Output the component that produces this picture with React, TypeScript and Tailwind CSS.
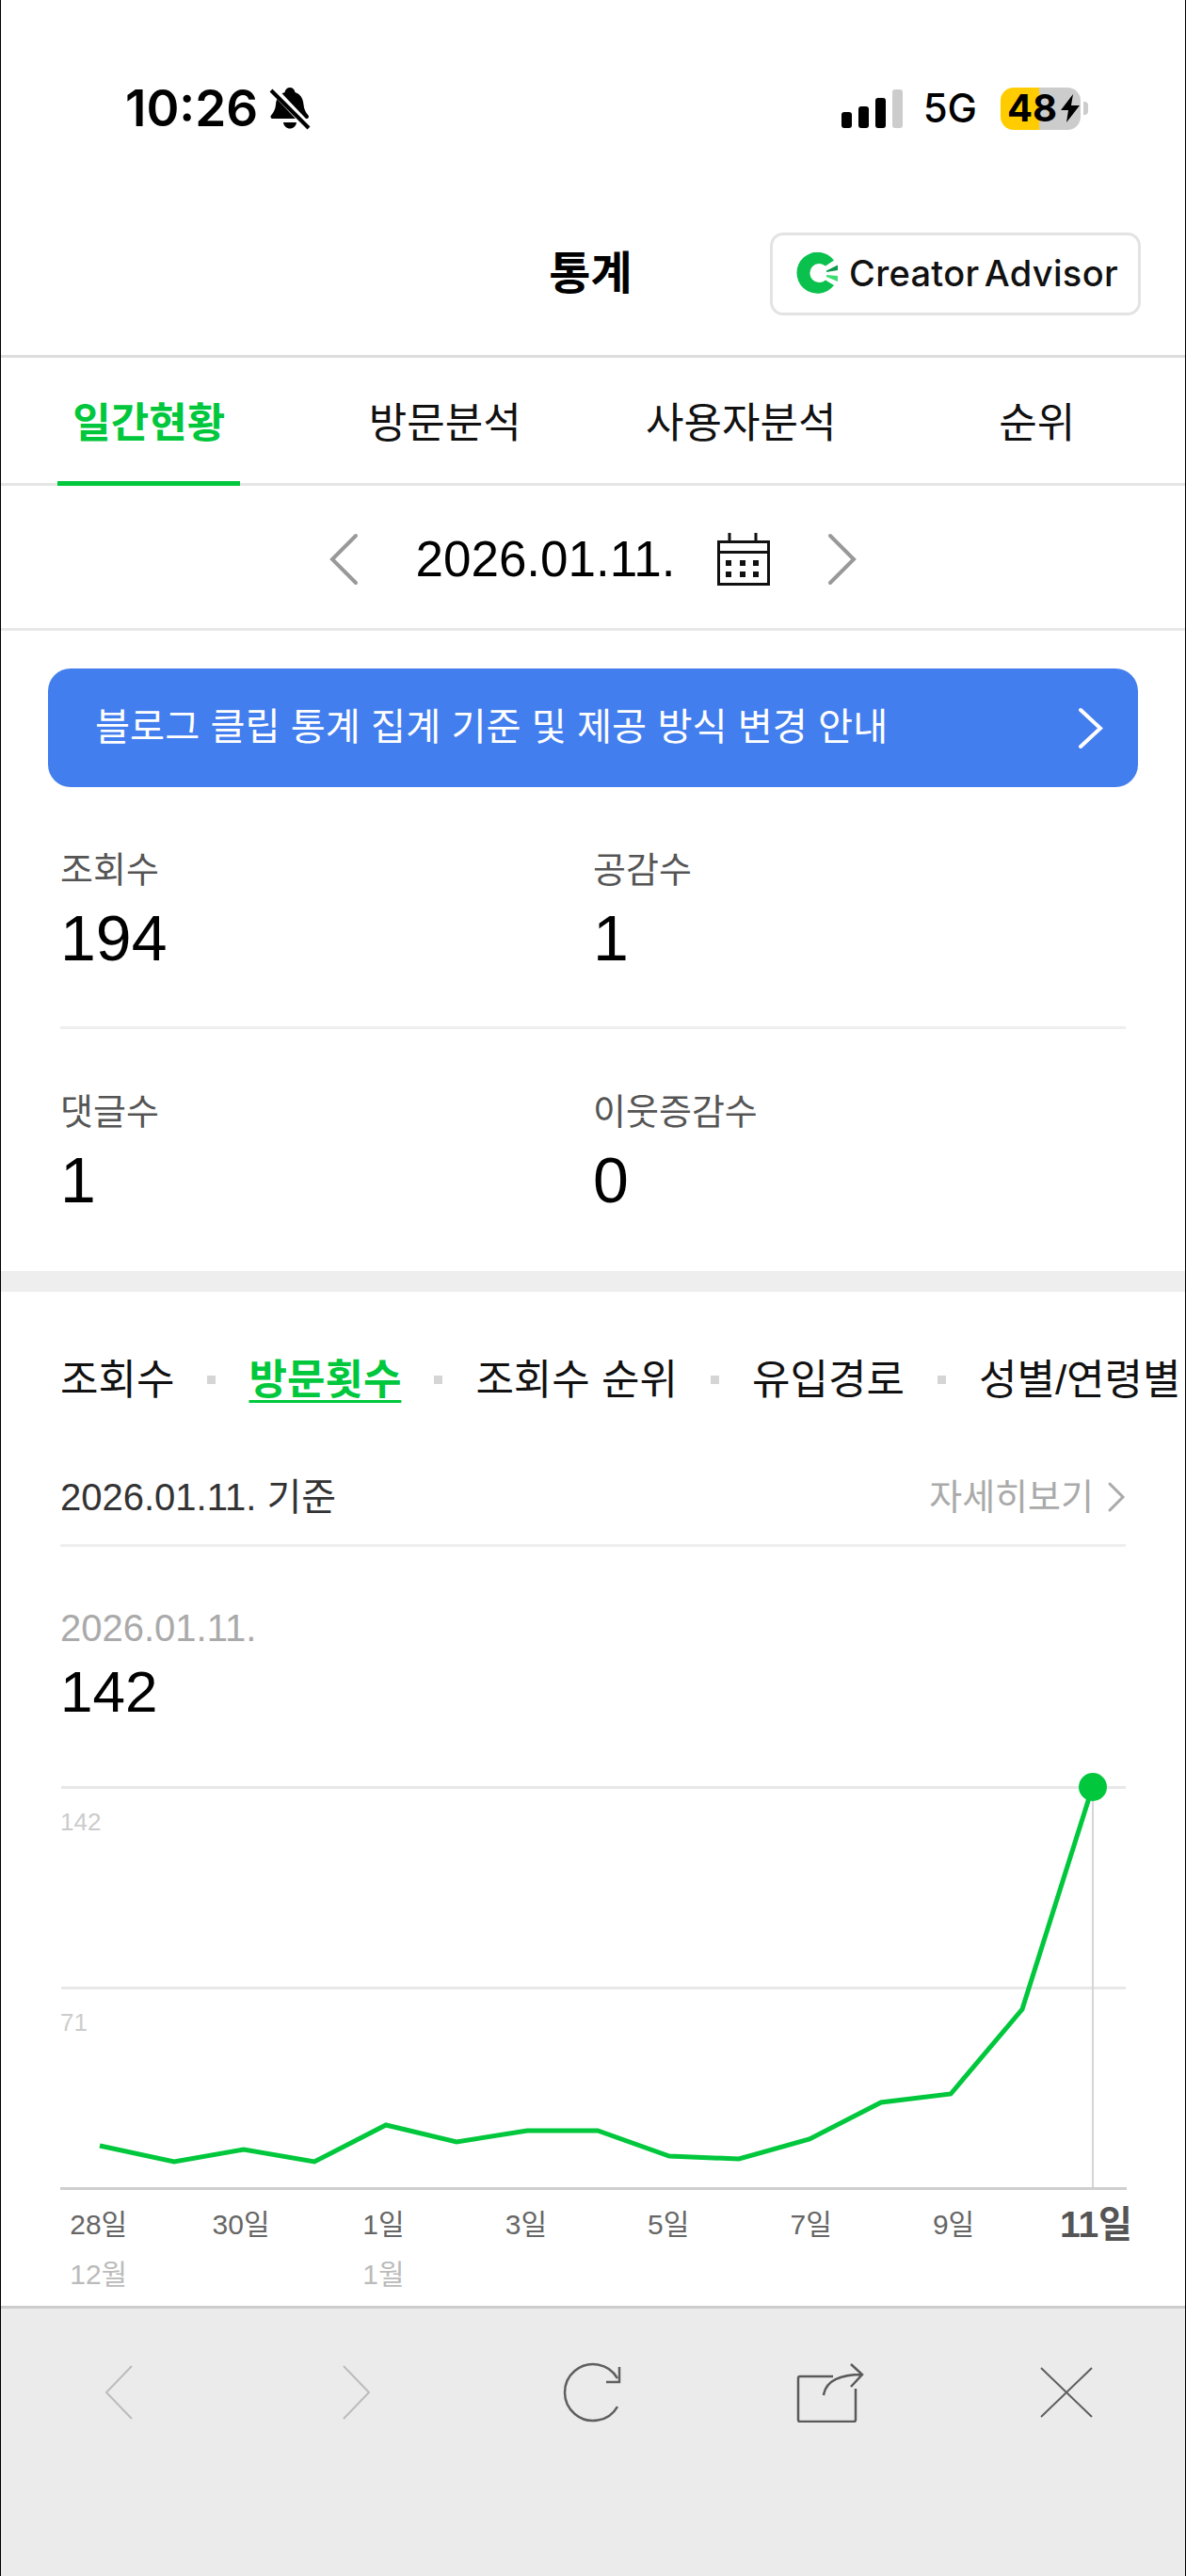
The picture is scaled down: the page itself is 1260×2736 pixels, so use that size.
const font = "font-['Liberation_Sans','Noto_Sans_CJK_KR',sans-serif]";

const tabs = ["일간현황", "방문분석", "사용자분석", "순위"];
const points =
  "106,398 185,415 259,402 334,415 410,376 485,394 560,382 635,382 711,409 785,412 860,391 936,352 1010,343 1086,253 1161,16";
const days = [
  { day: "28일", month: "12월" },
  { day: "30일" },
  { day: "1일", month: "1월" },
  { day: "3일" },
  { day: "5일" },
  { day: "7일" },
  { day: "9일" },
];

const Logo = () => (
  <svg width="46" height="46" viewBox="0 0 46 46" className="shrink-0">
    <path d="M40 8.5A22 22 0 1 0 40 35L31 29.5A10 10 0 1 1 31 14.5Z" fill="#0bc14e" />
    <path d="M32 19.5L44 13.5V19L32 21Z" fill="#0a9a4c" />
    <path d="M32 24L44 25V31L32 26Z" fill="#3fdc74" />
  </svg>
);

const BellOff = () => (
  <svg width="44" height="46" viewBox="0 0 44 46" className="ml-[12px]">
    <path d="M22 1c3 0 5 2 5.500 5 6 2 8.500 7 9 13 .5 5 2 8 5 11.500 1 1.500.5 3.500-2 3.500H4c-2.500 0-3-2-2-3.500C5 27 6.500 24 7 19c.5-6 3-11 9.500-13C17 3 19 1 22 1Z" fill="#000" />
    <path d="M15 38h14c-.5 4-3.500 6.500-7 6.500S15.500 42 15 38Z" fill="#000" />
    <path d="M3 2L43 44" stroke="#fff" strokeWidth="8" />
    <path d="M2 4L42 44" stroke="#000" strokeWidth="4" />
  </svg>
);

const StatusBar = () => (
  <div className="flex h-[216px] items-start justify-between pt-[90px] pl-[132px] pr-[103px] font-['Inter',sans-serif] text-black">
    <div className="flex h-[50px] items-center">
      <span className="text-[53px] leading-none font-semibold">10:26</span>
      <BellOff />
    </div>
    <div className="flex h-[50px] items-center">
      <div className="mt-[1px] flex items-end gap-[7px]">
        <div className="h-[17px] w-[11px] rounded-[3px] bg-black" />
        <div className="h-[23px] w-[11px] rounded-[3px] bg-black" />
        <div className="h-[32px] w-[11px] rounded-[3px] bg-black" />
        <div className="h-[41px] w-[11px] rounded-[3px] bg-[#cccccc]" />
      </div>
      <span className="ml-[22px] text-[42px] leading-none font-medium">5G</span>
      <div className="ml-[25px] flex h-[45px] w-[85px] items-center rounded-[14px] bg-[linear-gradient(to_right,#ffcc00_48%,#cccccc_48%)] pl-[7px]">
        <span className="text-[40px] leading-none font-bold">48</span>
        <svg width="20" height="30" viewBox="0 0 20 30" className="ml-[4px]">
          <path d="M13 0L0 17H8L6 30L20 12H11Z" fill="#000" />
        </svg>
      </div>
      <div className="ml-[3px] h-[14px] w-[5px] rounded-r-[4px] bg-[#cccccc]" />
    </div>
  </div>
);

const Chevron = ({ dir, color, width, height, stroke }: { dir: "left" | "right"; color: string; width: number; height: number; stroke: number }) => {
  const pad = stroke;
  const pts =
    dir === "left"
      ? `${width - pad},${pad} ${pad},${height / 2} ${width - pad},${height - pad}`
      : `${pad},${pad} ${width - pad},${height / 2} ${pad},${height - pad}`;
  return (
    <svg width={width} height={height} viewBox={`0 0 ${width} ${height}`} className="shrink-0">
      <polyline points={pts} fill="none" stroke={color} strokeWidth={stroke} strokeLinecap="round" strokeLinejoin="miter" />
    </svg>
  );
};

const CalendarIcon = () => (
  <svg width="56" height="56" viewBox="0 0 56 56" className="shrink-0">
    <rect x="1.500" y="9.500" width="53" height="45" fill="none" stroke="#111" strokeWidth="3" />
    <path d="M1.500 20.500H54.500M13 0V9M41 0V9" fill="none" stroke="#111" strokeWidth="3" />
    {[29, 41].map((y) =>
      [9, 24, 38].map((x) => <rect key={`${x}-${y}`} x={x} y={y} width="6" height="6" fill="#111" />),
    )}
  </svg>
);

const Stat = ({ label, value }: { label: string; value: string }) => (
  <div className="flex flex-col gap-[12px]">
    <div className="h-[44px] text-[38px] leading-[44px] text-[#555555]">{label}</div>
    <div className="h-[76px] text-[68px] leading-[76px] text-black">{value}</div>
  </div>
);

const Sep = () => <div className="h-[9px] w-[9px] shrink-0 bg-[#d5d5d5]" />;

const Chart = () => (
  <div className="relative -ml-[1px] h-[448px] w-[1260px]">
    <svg width="1260" height="448" viewBox="0 0 1260 448" className="absolute top-0 left-0">
      <path d="M65 17.500H1196M65 230.500H1196" stroke="#e8e8e8" strokeWidth="3" />
      <path d="M1161 16V442" stroke="#d5d5d5" strokeWidth="2" />
      <path d="M64 443.500H1197" stroke="#cfcfcf" strokeWidth="3" />
      <polyline points={points} fill="none" stroke="#00c73c" strokeWidth="5" strokeLinejoin="miter" />
      <circle cx="1161" cy="17" r="15" fill="#00c73c" />
    </svg>
    <span className="absolute top-[39px] left-[64px] text-[26px] leading-[30px] text-[#cccccc]">142</span>
    <span className="absolute top-[252px] left-[64px] text-[26px] leading-[30px] text-[#cccccc]">71</span>
  </div>
);

const ToolBar = () => (
  <div className="grid flex-1 grid-cols-5 items-start border-t-[3px] border-[#cccccc] bg-[#ebebeb] pt-[57px]">
    <div className="flex h-[64px] items-center justify-center">
      <svg width="32" height="60" viewBox="0 0 32 60">
        <polyline points="29,2 2,30 29,58" fill="none" stroke="#bcbcbc" strokeWidth="2" />
      </svg>
    </div>
    <div className="flex h-[64px] items-center justify-center">
      <svg width="32" height="60" viewBox="0 0 32 60">
        <polyline points="3,2 30,30 3,58" fill="none" stroke="#bcbcbc" strokeWidth="2" />
      </svg>
    </div>
    <div className="flex h-[64px] items-center justify-center">
      <svg width="64" height="64" viewBox="0 0 64 64">
        <path d="M58 17A30 30 0 1 0 58 47" fill="none" stroke="#5f5f5f" strokeWidth="2.500" />
        <path d="M60 5V21H46" fill="none" stroke="#5f5f5f" strokeWidth="2.500" />
      </svg>
    </div>
    <div className="flex h-[64px] items-center justify-center">
      <svg width="72" height="64" viewBox="0 0 72 64">
        <path d="M39 15H4Q2 15 2 17V61Q2 63 4 63H61Q63 63 63 61V28" fill="none" stroke="#5a5a5a" strokeWidth="2.500" />
        <path d="M29 35C31 22 42 13 70 13M58 2L70 13L58 26" fill="none" stroke="#5a5a5a" strokeWidth="2.500" />
      </svg>
    </div>
    <div className="flex h-[64px] items-center justify-center">
      <svg width="56" height="54" viewBox="0 0 56 54">
        <path d="M1 1L55 53M55 1L1 53" fill="none" stroke="#5f5f5f" strokeWidth="2" />
      </svg>
    </div>
  </div>
);

export default function App() {
  return (
    <div className={`flex h-[2736px] w-[1260px] flex-col overflow-hidden border-x border-black bg-white ${font}`}>
      <StatusBar />

      <header className="grid h-[164px] grid-cols-[1fr_auto_1fr] items-center border-b-[3px] border-[#dddddd] pr-[5px] pb-[12px]">
        <div />
        <h1 className="text-[48px] leading-none font-semibold text-black">통계</h1>
        <div className="flex justify-end pr-[42px]">
          <div className="flex h-[88px] w-[394px] items-center gap-[10px] rounded-[14px] border-[3px] border-[#e3e3e3] pl-[25px] font-['Inter',sans-serif] text-[38px] font-medium tracking-[0.3px] [word-spacing:-5px] text-[#111111]">
            <Logo />
            <span>Creator Advisor</span>
          </div>
        </div>
      </header>

      <nav className="grid h-[136px] grid-cols-4 border-b-[3px] border-[#e5e5e5] pt-[6px]">
        {tabs.map((tab, i) => (
          <div key={tab} className="relative flex items-center justify-center">
            <span className={i === 0 ? "text-[44px] font-bold text-[#00c73c]" : "text-[44px] text-[#111111]"}>{tab}</span>
            {i === 0 && <div className="absolute -bottom-[3px] h-[5px] w-[194px] bg-[#00c73c]" />}
          </div>
        ))}
      </nav>

      <div className="flex h-[154px] items-center justify-center border-b-[3px] border-[#e8e8e8] pt-[4px]">
        <Chevron dir="left" color="#999999" width={33} height={58} stroke={4} />
        <span className="ml-[59px] text-[53px] leading-none text-black">2026.01.11.</span>
        <div className="ml-[44px]">
          <CalendarIcon />
        </div>
        <div className="ml-[60px]">
          <Chevron dir="right" color="#999999" width={33} height={58} stroke={4} />
        </div>
      </div>

      <div className="mx-[50px] mt-[40px] flex h-[126px] items-center justify-between rounded-[24px] bg-[#437eee] pr-[36px] pl-[50px] text-white">
        <span className="text-[40.3px] leading-none">블로그 클립 통계 집계 기준 및 제공 방식 변경 안내</span>
        <Chevron dir="right" color="#ffffff" width={29} height={47} stroke={4} />
      </div>

      <section className="mx-[63px] mt-[66px] grid grid-cols-[566px_1fr]">
        <Stat label="조회수" value="194" />
        <Stat label="공감수" value="1" />
      </section>
      <div className="mx-[63px] mt-[56px] h-[3px] bg-[#eeeeee]" />
      <section className="mx-[63px] mt-[66px] grid grid-cols-[566px_1fr]">
        <Stat label="댓글수" value="1" />
        <Stat label="이웃증감수" value="0" />
      </section>

      <div className="mt-[59px] h-[22px] shrink-0 bg-[#eeeeee]" />

      <div className="mt-[56px] flex h-[75px] items-center gap-[35px] overflow-hidden pl-[63px] text-[44px] whitespace-nowrap text-[#111111]">
        <span className="shrink-0">조회수</span>
        <Sep />
        <span className="shrink-0 font-semibold text-[#00c73c] underline decoration-[3px] underline-offset-[6px]">방문횟수</span>
        <Sep />
        <span className="shrink-0">조회수 순위</span>
        <Sep />
        <span className="shrink-0">유입경로</span>
        <Sep />
        <span className="shrink-0">성별/연령별</span>
      </div>

      <div className="mx-[63px] mt-[58px] flex h-[58px] items-center justify-between">
        <span className="text-[40px] leading-none text-[#333333]">2026.01.11. 기준</span>
        <span className="flex items-center gap-[14px] text-[38px] leading-none text-[#aaaaaa]">
          자세히보기
          <Chevron dir="right" color="#aaaaaa" width={20} height={34} stroke={3} />
        </span>
      </div>
      <div className="mx-[63px] mt-[21px] h-[3px] bg-[#eeeeee]" />

      <div className="mx-[63px] mt-[64px] text-[40px] leading-[44px] text-[#aaaaaa]">2026.01.11.</div>
      <div className="mx-[63px] mt-[11px] text-[62px] leading-[70px] text-black">142</div>

      <div className="mt-[49px]">
        <Chart />
      </div>

      <div className="mt-[16px] ml-[28px] grid h-[104px] grid-cols-[repeat(8,151.4px)]">
        {days.map((d) => (
          <div key={d.day} className="flex flex-col items-center gap-[17px] text-[30px] leading-[36px]">
            <span className="text-[#666666]">{d.day}</span>
            {d.month && <span className="text-[#bbbbbb]">{d.month}</span>}
          </div>
        ))}
        <div className="flex flex-col items-center text-[39px] leading-[36px] font-bold text-[#555555]">
          <span>11일</span>
        </div>
      </div>

      <ToolBar />
    </div>
  );
}
